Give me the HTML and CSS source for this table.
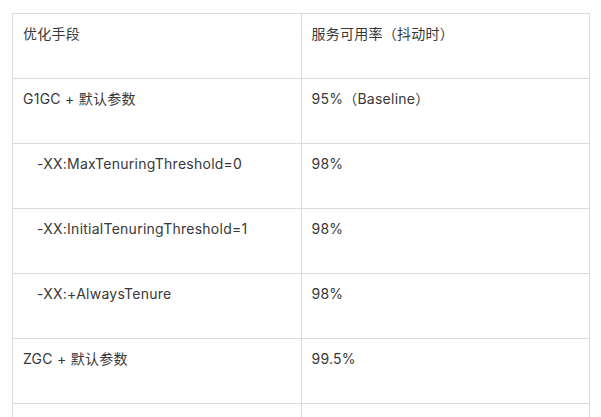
FILE: index.html
```html
<!DOCTYPE html>
<html lang="zh-CN">
<head>
<meta charset="utf-8">
<title>GC 优化对比</title>
<link rel="stylesheet" href="styles.css">
</head>
<body>
<table class="data-table">
  <tbody>
    <tr><td>优化手段</td><td>服务可用率（抖动时）</td></tr>
    <tr><td>G1GC + 默认参数</td><td>95%（Baseline）</td></tr>
    <tr><td class="indent">-XX:MaxTenuringThreshold=0</td><td>98%</td></tr>
    <tr><td class="indent">-XX:InitialTenuringThreshold=1</td><td>98%</td></tr>
    <tr><td class="indent">-XX:+AlwaysTenure</td><td>98%</td></tr>
    <tr><td>ZGC + 默认参数</td><td>99.5%</td></tr>
    <tr><td>ZGC + 自定义参数（并发线程数调优）</td><td>99.99%以上</td></tr>
  </tbody>
</table>
</body>
</html>
```
FILE: styles.css
```css
html, body {
  margin: 0;
  padding: 0;
  background: #fff;
}
body {
  padding: 13px 0 0 12px;
  font-family: "Inter", "Noto Sans CJK SC", sans-serif;
  font-size: 14px;
  color: #383838;
}
.data-table {
  border-collapse: collapse;
  table-layout: fixed;
  width: 578px;
}
.data-table td {
  width: 50%;
  height: 65px;
  box-sizing: border-box;
  border: 1px solid #dcdcdc;
  padding: 9px 10px 0 10px;
  vertical-align: top;
  line-height: 21px;
  letter-spacing: 0.25px;
  white-space: nowrap;
  overflow: hidden;
}
.data-table td.indent {
  padding-left: 24px;
}
```
